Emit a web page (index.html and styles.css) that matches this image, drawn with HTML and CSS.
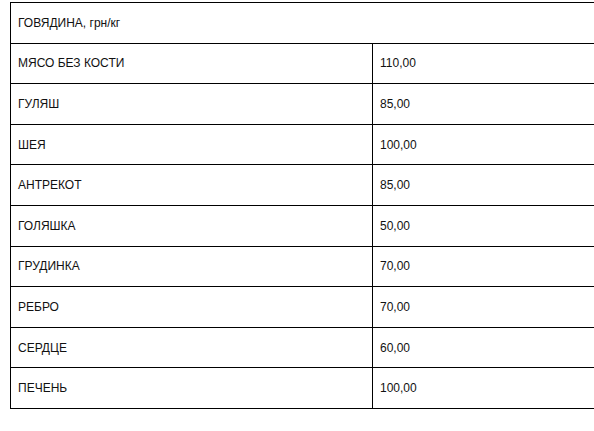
FILE: index.html
```html
<!DOCTYPE html>
<html lang="ru">
<head>
<meta charset="utf-8">
<title>Говядина</title>
<link rel="stylesheet" href="styles.css">
</head>
<body>
<div class="wrap">
<table class="price">
<colgroup><col class="c1"><col class="c2"></colgroup>
<tr class="row"><td class="cell" colspan="2">ГОВЯДИНА, грн/кг</td></tr>
<tr class="row"><td class="cell">МЯСО БЕЗ КОСТИ</td><td class="cell">110,00</td></tr>
<tr class="row"><td class="cell">ГУЛЯШ</td><td class="cell">85,00</td></tr>
<tr class="row"><td class="cell">ШЕЯ</td><td class="cell">100,00</td></tr>
<tr class="row"><td class="cell">АНТРЕКОТ</td><td class="cell">85,00</td></tr>
<tr class="row"><td class="cell">ГОЛЯШКА</td><td class="cell">50,00</td></tr>
<tr class="row"><td class="cell">ГРУДИНКА</td><td class="cell">70,00</td></tr>
<tr class="row"><td class="cell">РЕБРО</td><td class="cell">70,00</td></tr>
<tr class="row"><td class="cell">СЕРДЦЕ</td><td class="cell">60,00</td></tr>
<tr class="row"><td class="cell">ПЕЧЕНЬ</td><td class="cell">100,00</td></tr>
</table>
</div>
</body>
</html>
```
FILE: styles.css
```css
html, body {
  margin: 0;
  padding: 0;
  overflow: hidden;
  background: #fff;
}
.wrap {
  padding: 2px 0 0 10px;
  width: 584px;
  overflow: hidden;
}
.price {
  border-collapse: collapse;
  table-layout: fixed;
  width: 724px;
  font-family: "Liberation Sans", Arial, sans-serif;
  font-size: 12px;
  color: #111;
}
.c1, .c2 { width: 362px; }
.row { height: 40.6px; }
.cell {
  border: 1px solid #000;
  padding: 0 7px;
  vertical-align: middle;
  white-space: nowrap;
}
```
